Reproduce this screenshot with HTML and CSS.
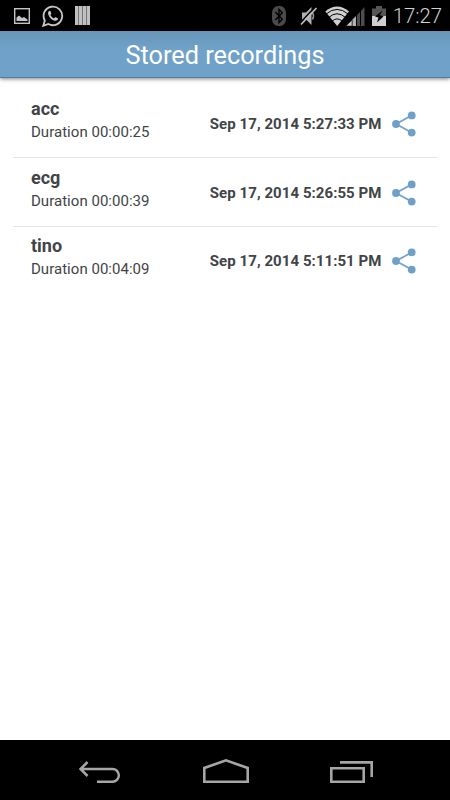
FILE: index.html
```html
<!DOCTYPE html>
<html lang="en">
<head>
    <meta charset="UTF-8">
    <meta name="viewport" content="width=device-width, initial-scale=1.0">
    <title>Stored recordings</title>
    <link rel="stylesheet" href="styles.css">
</head>
<body>
    <!-- Shared share icon -->
    <svg class="defs">
        <symbol id="share" viewBox="0 0 24 26">
            <path d="M19.500 4.500L4 13l15.500 8.500" fill="none" stroke="#6fa0c8" stroke-width="1.700"/>
            <circle cx="19.700" cy="4.400" r="3.900"/>
            <circle cx="4" cy="13" r="3.900"/>
            <circle cx="19.700" cy="21.600" r="3.900"/>
        </symbol>
    </svg>

    <div class="status-bar">
        <div class="notifications">
            <svg width="16" height="16" viewBox="0 0 16 16">
                <rect x="0.700" y="0.700" width="14.600" height="14.600" fill="none" stroke="#c4c4c4" stroke-width="1.400"/>
                <path d="M2.500 13V9.500L5 7.500l3 2.500 2-1 3.500 2.500V13z" fill="#c4c4c4"/>
            </svg>
            <svg class="chat" width="22" height="22" viewBox="0 0 22 22">
                <path d="M1.300 20.800l1.500-5.300A9.300 9.300 0 1 1 6.300 19z" fill="none" stroke="#c8c8c8" stroke-width="1.800"/>
                <path d="M7.700 5.800c-1.400.5-1.900 1.900-1.500 3.400.9 3.200 3.600 5.700 6.600 6.600 1.500.3 3-.5 3.300-2.200l-2.700-1.600-1.400 1.400c-1.700-.7-2.900-1.900-3.600-3.400l1-1.500-1-2.600z" fill="#c8c8c8"/>
            </svg>
            <svg class="stripes" width="15" height="19" viewBox="0 0 15 19">
                <path d="M0 0h15v19H0z" fill="#777"/>
                <path d="M0 0h3v19H0zM4 0h3v19H4zM8 0h3v19H8zM12 0h3v19h-3z" fill="#c0c0c0"/>
            </svg>
        </div>
        <div class="system">
            <svg width="14" height="20" viewBox="0 0 14 20">
                <rect width="14" height="20" rx="6" ry="7" fill="#4a4a4a"/>
                <path d="M3.300 6l7 7.300L7 16.500v-13l3.300 3.200-7 7.300" fill="none" stroke="#000" stroke-width="1.400"/>
            </svg>
            <svg class="mute" width="18" height="20" viewBox="0 0 18 20">
                <path d="M2 6.500h4L11.500 1v18L6 13.500H2z" fill="#b0b0b0"/>
                <path d="M12.500 6.500q2 3.500 0 7" fill="none" stroke="#999" stroke-width="1.500"/>
                <path d="M0 17L15 1" stroke="#000" stroke-width="1.500"/>
                <path d="M1 18.500L16.500 2" stroke="#c0c0c0" stroke-width="1.700"/>
            </svg>
            <svg class="wifi" width="40" height="20" viewBox="0 0 40 20">
                <path d="M0.300 5.500Q12 -4.500 24 5.500L12.200 20z" fill="#cfcfcf"/>
                <path d="M1 8.100Q12 -1.300 23.300 8.100M3.700 11.500Q12 4 20.500 11.500M7 15.300Q12 10.500 17.500 15.300" fill="none" stroke="#000" stroke-width="1"/>
                <path d="M21 20l6-6v6z" fill="#c8c8c8" stroke="#000" stroke-width=".5"/>
                <path d="M27.500 13.500l3.500-3.500v10h-3.500z" fill="#b0b0b0"/>
                <path d="M32 9l3-3v14h-3zM36 5l3.500-4v19H36z" fill="#4d4d4d"/>
            </svg>
            <svg class="battery" width="14" height="20" viewBox="0 0 14 20">
                <path d="M0 2.500h4V0h6v2.500h4V11H0z" fill="#555"/>
                <path d="M0 10h14v10H0z" fill="#cfcfcf"/>
                <path d="M10.500 4.500L3 10.500l3.500 1-1.500 5 6.500-6L8 9z" fill="#000"/>
            </svg>
            <span class="clock">17:27</span>
        </div>
    </div>

    <header class="title-bar">
        <h1>Stored recordings</h1>
    </header>

    <main class="recordings">
        <div class="recording">
            <div class="info">
                <div class="name">acc</div>
                <div class="duration">Duration 00:00:25</div>
            </div>
            <div class="date">Sep 17, 2014 5:27:33 PM</div>
            <svg class="share"><use href="#share"/></svg>
        </div>
        <div class="recording">
            <div class="info">
                <div class="name">ecg</div>
                <div class="duration">Duration 00:00:39</div>
            </div>
            <div class="date">Sep 17, 2014 5:26:55 PM</div>
            <svg class="share"><use href="#share"/></svg>
        </div>
        <div class="recording">
            <div class="info">
                <div class="name">tino</div>
                <div class="duration">Duration 00:04:09</div>
            </div>
            <div class="date">Sep 17, 2014 5:11:51 PM</div>
            <svg class="share"><use href="#share"/></svg>
        </div>
    </main>

    <nav class="nav-bar">
        <svg width="42" height="24" viewBox="0 0 42 24">
            <path d="M2 9h31.500a6.200 6.200 0 0 1 0 12.700H18M8.500 2L1.500 9l7 7" fill="none" stroke="#a6a6a6" stroke-width="2.500"/>
        </svg>
        <svg class="home" width="46" height="26" viewBox="0 0 46 26">
            <path d="M1.300 23.700V10L23 2.300 44.700 10v13.700z" fill="none" stroke="#a6a6a6" stroke-width="2.600"/>
        </svg>
        <svg width="43" height="24" viewBox="0 0 43 24">
            <path d="M1.300 8.300h32.400v13.400H1.300zM10 2.400h31.700V17" fill="none" stroke="#a6a6a6" stroke-width="2.600"/>
        </svg>
    </nav>
</body>
</html>
```

FILE: styles.css
```css
body {
    display: flex;
    flex-direction: column;
    height: 100vh;
    margin: 0;
    font-family: Roboto, "Liberation Sans", sans-serif;
    color: #414447;
    background-color: #fff;
    overflow: hidden;
}
svg {
    display: block;
    flex-shrink: 0;
}
.defs {
    display: none;
}
.status-bar {
    display: flex;
    justify-content: space-between;
    height: 31px;
    padding: 0 8px 0 14px;
    background: #000;
}
.notifications,
.system {
    display: flex;
    align-items: center;
}
.chat {
    margin-left: 12px;
}
.stripes {
    margin-left: 11px;
}
.mute {
    margin-left: 14px;
}
.wifi {
    margin-left: 7px;
}
.battery {
    margin-left: 7px;
}
.clock {
    margin-left: 7px;
    padding-top: 1px;
    font-size: 20.300px;
    font-weight: 300;
    color: #d0d0d0;
}
.title-bar {
    height: 46px;
    background: linear-gradient(#6896b9, #70a1c8 40%);
    border-bottom: 1px solid #557c9b;
    box-shadow: 0 1px 4px rgba(0, 0, 0, 0.5);
}
.title-bar h1 {
    margin: 0;
    font-size: 25.300px;
    font-weight: 400;
    line-height: 50px;
    text-align: center;
    color: #fff;
}
.recordings {
    flex: 1;
    padding: 11px 12px 0 13px;
}
.recording {
    display: flex;
    align-items: center;
    box-sizing: border-box;
    height: 68.400px;
    padding: 0 22px 0 18px;
}
.recording + .recording {
    border-top: 1px solid #e6e6e6;
}
.info {
    flex: 1;
    margin-top: -4px;
}
.name {
    font-size: 18px;
    font-weight: 700;
    line-height: 23px;
}
.duration {
    font-size: 15px;
    line-height: 25px;
    letter-spacing: 0.03px;
}
.date {
    padding-top: 2px;
    font-size: 15px;
    font-weight: 700;
    letter-spacing: 0.06px;
}
.share {
    width: 24px;
    height: 26px;
    margin-top: 1px;
    margin-left: 10.500px;
    fill: #6fa0c8;
}
.nav-bar {
    display: flex;
    align-items: center;
    justify-content: space-between;
    box-sizing: border-box;
    height: 60px;
    padding: 4px 77px 0 79px;
    background: #000;
}
.home {
    margin-top: -2px;
}
```
